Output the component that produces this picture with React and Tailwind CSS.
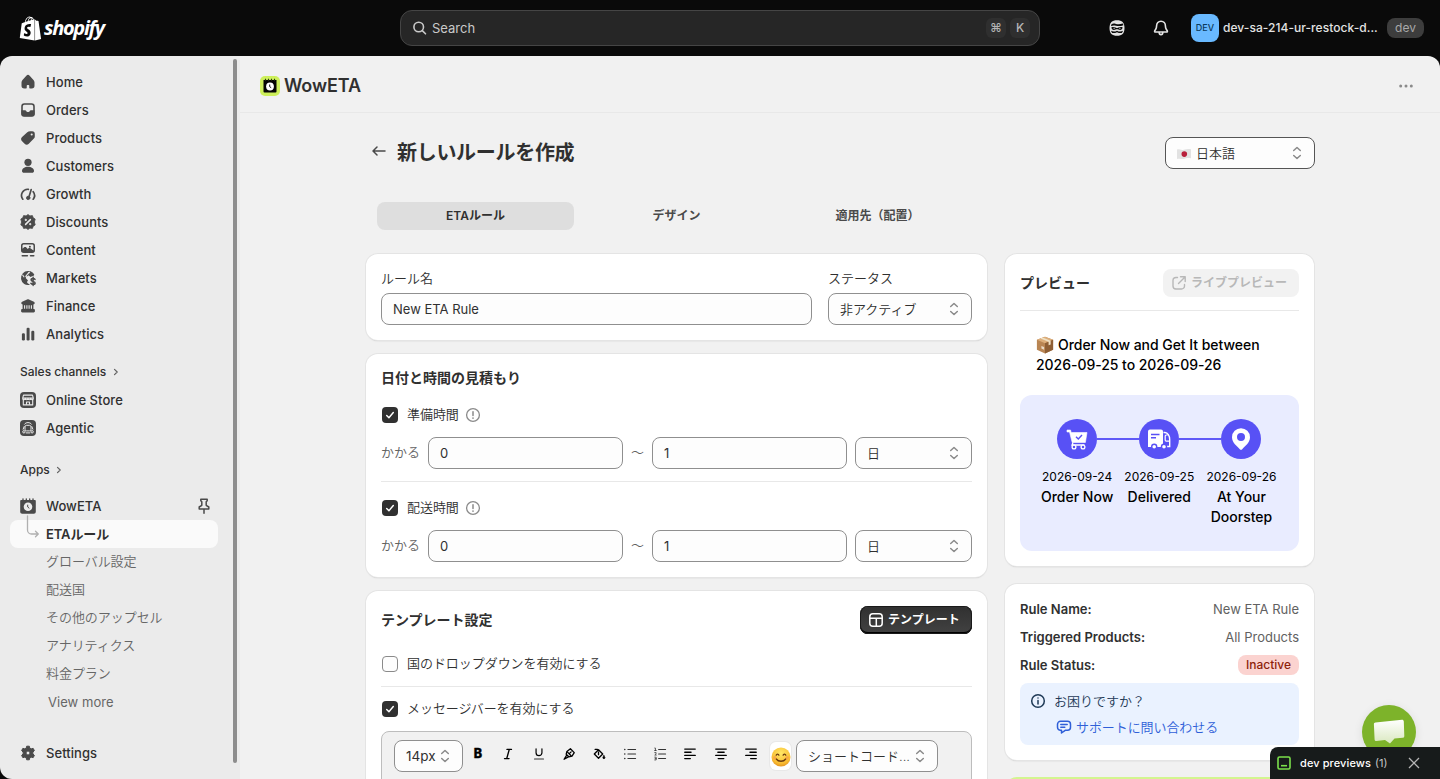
import React from 'react';
import { FaShopify } from 'react-icons/fa6';

const Svg = ({ children, className = 'size-5', ...p }) => (
  <svg viewBox="0 0 20 20" fill="currentColor" className={`shrink-0 ${className}`} {...p}>{children}</svg>
);
const Line = ({ children, className = 'size-5', w = 1.5, ...p }) => (
  <svg viewBox="0 0 20 20" fill="none" stroke="currentColor" strokeWidth={w} strokeLinecap="round" strokeLinejoin="round" className={`shrink-0 ${className}`} {...p}>{children}</svg>
);

const icons = {
  home: (
    <Svg><path d="M8.344 3.692a2.25 2.25 0 0 1 3.312 0l3.854 4.19a3.75 3.75 0 0 1 .99 2.538v3.33a2.75 2.75 0 0 1-2.75 2.75h-1.75a.75.75 0 0 1-.75-.75v-2a.75.75 0 0 0-.75-.75h-1a.75.75 0 0 0-.75.75v2a.75.75 0 0 1-.75.75h-1.75a2.75 2.75 0 0 1-2.75-2.75v-3.33c0-.94.353-1.846.99-2.539l3.854-4.189Z" /></Svg>
  ),
  orders: (
    <Svg><rect x="4" y="4" width="12" height="12" rx="2.400" fill="none" stroke="currentColor" strokeWidth="1.600" /><path d="M3.400 10.300h3.800c.4 0 .7.200.9.500l.4.700c.2.300.5.500.900.5h1.200c.4 0 .7-.2.900-.5l.4-.7c.2-.3.500-.5.900-.5h3.800v3.400a2.600 2.600 0 0 1-2.600 2.600H6a2.600 2.600 0 0 1-2.600-2.600v-3.400Z" /></Svg>
  ),
  products: (
    <Svg><path fillRule="evenodd" d="M12.100 3.300h2.100a2.600 2.600 0 0 1 2.600 2.600v2.500c0 .8-.3 1.600-.9 2.200l-5.100 5.100a3 3 0 0 1-4.200 0l-2.500-2.500a3 3 0 0 1 0-4.200l5.200-4.700c.8-.7 1.700-1 2.800-1Zm1.600 4.200a1.050 1.050 0 1 0 0-2.100 1.050 1.050 0 0 0 0 2.100Z" /></Svg>
  ),
  customers: (
    <Svg><circle cx="10" cy="6.300" r="3.600" /><path d="M4 14.900c0-2.400 2.700-4.100 6-4.100s6 1.700 6 4.100c0 1.100-.8 1.900-1.900 1.900H5.900C4.800 16.800 4 16 4 14.900Z" /></Svg>
  ),
  growth: (
    <Line w={1.700}><path d="M4.800 15.200a6.200 6.200 0 0 1 5.600-9.900M15.200 7.700a6.200 6.200 0 0 1 0 7.500" /><path d="m13.200 5.600-2.100 6.900" /><circle cx="10.200" cy="13.900" r="1.700" fill="currentColor" strokeWidth=".9" /></Line>
  ),
  discounts: (
    <Svg><path d="m10 2.500 1.900 1.400 2.500-.3.800 2.200 2 1.300-.8 2.900.8 2.900-2 1.300-.8 2.200-2.500-.3L10 17.500l-1.900-1.400-2.500.3-.8-2.200-2-1.300.8-2.900-.8-2.900 2-1.300.8-2.200 2.500.3L10 2.500Z" stroke="currentColor" strokeWidth=".8" strokeLinejoin="round" /><g stroke="#ebebeb" fill="#ebebeb"><path d="m7.600 12.400 4.800-4.800" strokeWidth="1.500" strokeLinecap="round" /><circle cx="7.800" cy="7.900" r=".7" /><circle cx="12.200" cy="12.100" r=".7" /></g></Svg>
  ),
  content: (
    <Svg><path fillRule="evenodd" d="M5.700 3h8.600A2.700 2.700 0 0 1 17 5.700v4.600a2.700 2.700 0 0 1-2.700 2.700H5.700A2.700 2.700 0 0 1 3 10.300V5.700A2.700 2.700 0 0 1 5.700 3Zm.1 1.500c-.7 0-1.300.6-1.300 1.300v3l1.600-1.500c.6-.5 1.500-.5 2 0l1.600 1.600.8-.7c.6-.4 1.300-.4 1.900 0l3.100 2.200V5.800c0-.7-.6-1.300-1.300-1.300H5.800Zm6.100 3.200a1 1 0 1 0 0-2 1 1 0 0 0 0 2Z" /><rect x="3.500" y="14.900" width="6.600" height="1.500" rx=".7" /><rect x="11.800" y="14.900" width="4.700" height="1.500" rx=".7" /></Svg>
  ),
  markets: (
    <Svg><path d="M10 3a7 7 0 1 0 2 13.700l-2.300-1.500c-.7-.5-.8-1.400-.3-2l.6-.7-1.800-1.900c-.6-.6-.4-1.500.3-1.900l1.500-.9c.8-.500 1-1.200.8-2l-.7-1.300 1.500-.8c1.300.5 2.400 1.200 3.200 2.300l-1.600 1.200.6.8 2.600-.9A7 7 0 0 0 10 3Z" /><path d="M16.100 7.200a7 7 0 0 0-3.600-3.700l-2.400 3.400 2.400 2.100 3.600-1.800Z" /><path d="m11 4.300-3.200 3.900 2 2.500M4.500 6.800l1.700 2.500" stroke="#ebebeb" strokeWidth="1.100" fill="none" /><path d="M17 11.400c-.5-.7-1.200-1-2-1-1.100 0-1.900.6-1.900 1.500 0 2 4 1 4 3 0 .9-.900 1.500-2 1.500-.9 0-1.700-.4-2.200-1.100M15.100 9.200v8.200" stroke="currentColor" strokeWidth="1.500" fill="none" strokeLinecap="round" /></Svg>
  ),
  finance: (
    <Svg><path d="M9.100 3.400c.6-.3 1.200-.3 1.800 0l5 2.300c1.400.7 1 2.600-.5 2.700v4.600h.3c.7 0 1.200.5 1.200 1.200v1c0 .7-.5 1.200-1.200 1.200H4.300c-.7 0-1.200-.5-1.200-1.200v-1c0-.7.5-1.200 1.200-1.200h.3V8.400c-1.500-.1-1.900-2-.5-2.700l5-2.300Z" /><path d="M6.600 9.200v3.600M8.900 9.200v3.600M11.100 9.200v3.600M13.400 9.200v3.600" stroke="#ebebeb" strokeWidth="1.100" /></Svg>
  ),
  analytics: (
    <Svg><rect x="3.900" y="9.300" width="3" height="7.200" rx="1.200" /><rect x="8.600" y="3.700" width="3" height="12.800" rx="1.200" /><rect x="13.300" y="6.800" width="3" height="9.700" rx="1.200" /></Svg>
  ),
  store: (
    <Svg><rect x="2" y="2" width="16" height="16" rx="4" /><g fill="none" stroke="#ebebeb" strokeWidth="1.100" strokeLinejoin="round"><path d="M5.500 5.100h9l.8 3H4.700l.8-3ZM5.300 9v5.900h9.400V9" /><path d="M4.700 8.200c0 2 2.600 2 2.600 0 0 2 2.700 2 2.700 0 0 2 2.700 2 2.700 0 0 2 2.600 2 2.600 0M8.500 14.700V12h3v2.700" /></g></Svg>
  ),
  agentic: (
    <Svg><rect x="2" y="2" width="16" height="16" rx="4" /><g fill="none" stroke="#ebebeb" strokeWidth="1"><rect x="7" y="7.300" width="6" height="5.600" rx="1.600" /><path d="M6.400 6.500C7.600 4 12.400 4 13.600 6.500M5 11.600l1.300-3.400M15 11.600l-1.300-3.400M7.800 14.900h4.400" /><circle cx="5.900" cy="13.800" r="1.200" /><circle cx="14.100" cy="13.800" r="1.200" /></g></Svg>
  ),
  wow: (
    <Svg><path d="M3.300 4h13.400c.7 0 1.100.4 1.100 1.100v10.600c0 1.200-.8 2-2 2H4.200c-1.200 0-2-.8-2-2V5.100c0-.7.4-1.100 1.100-1.100Z" /><path d="M5 2.800v2.500M8.300 2.800v2.500M11.700 2.800v2.500M15 2.800v2.500" stroke="currentColor" strokeWidth="1.300" strokeLinecap="round" /><circle cx="10" cy="10.800" r="4.300" fill="#ebebeb" /><path d="M9.700 8.700v2.300l1.600 1.300" stroke="currentColor" strokeWidth="1" fill="none" /></Svg>
  ),
  settings: (
    <Svg><path fillRule="evenodd" stroke="currentColor" strokeWidth="1" strokeLinejoin="round" d="M8.700 3.200h2.600l.5 2 1.300.7 2-.6 1.300 2.300-1.500 1.500v1.800l1.500 1.500-1.300 2.300-2-.6-1.300.7-.5 2H8.700l-.5-2-1.300-.7-2 .6-1.300-2.300 1.500-1.500V9.100L3.600 7.600l1.300-2.300 2 .6 1.300-.7.5-2ZM10 12a2 2 0 1 0 0-4 2 2 0 0 0 0 4Z" /></Svg>
  ),
};

const NavRow = ({ icon, children }) => (
  <div className="flex h-7 items-center gap-2 pl-[18px] text-[#4a4a4a]">
    {icons[icon]}
    <span className="pt-[2px] font-[550] tracking-[.05px] text-[#303030]">{children}</span>
  </div>
);
const SubRow = ({ children }) => <div className="flex h-7 items-center pl-[46px] font-[350] tracking-[-.05px] text-[#666]">{children}</div>;

const Updown = ({ className = '' }) => (
  <svg viewBox="0 0 10 14" className={`h-[14px] w-[10px] shrink-0 ${className}`} fill="none" stroke="#8a8a8a" strokeWidth="1.500" strokeLinecap="round" strokeLinejoin="round"><path d="M1.700 4.500 5 1.500l3.300 3M1.700 9.500l3.300 3 3.300-3" /></svg>
);
const Field = ({ children, className = '', select, pr = 'pr-3', text = 'pt-[2px]' }) => (
  <div className={`flex h-8 items-center justify-between rounded-lg border border-[#8f8f8f] bg-[#fdfdfd] pl-[11px] text-[#303030] ${pr} ${className}`}>
    <span className={`whitespace-nowrap ${text}`}>{children}</span>
    {select && <Updown />}
  </div>
);
const Card = ({ children, className = '' }) => (
  <section className={`rounded-xl bg-white shadow-[0_0_0_1px_#e4e4e4,0_2px_0_-1px_#c6c6c6,0_2px_2px_-1px_#00000022] ${className}`}>{children}</section>
);
const Check = ({ on, children, info }) => (
  <div className="flex h-5 items-center text-[#303030]">
    {on ? (
      <span className="ml-px grid size-4 place-items-center rounded bg-[#303030] text-white"><Line className="size-3" w={2.400}><path d="m4.500 10.800 3.700 3.700 7.300-8.700" /></Line></span>
    ) : (
      <span className="ml-px size-4 rounded border border-[#8a8a8a] bg-[#fdfdfd]" />
    )}
    <span className="ml-[9px] font-[350] tracking-[-.05px]">{children}</span>
    {info && <Line className="ml-1 size-5 text-[#8a8a8a]" w={1.300}><circle cx="10" cy="10" r="6.400" /><path d="M10 6.800v3.800" strokeWidth="1.500" /><path d="M10 13v.1" strokeWidth="1.700" /></Line>}
  </div>
);
const TimeRow = () => (
  <div className="flex items-center">
    <span className="w-[47px] font-[350] text-[#616161]">かかる</span>
    <Field className="w-[195px]">0</Field>
    <span className="w-[29px] text-center font-[350] text-[#616161]">～</span>
    <Field className="w-[195px]">1</Field>
    <Field className="ml-2 w-[117px] font-[350]" text="pt-px" select>日</Field>
  </div>
);

const tools = [
  <text key="b" x="10" y="15.900" textAnchor="middle" fontSize="18" fontWeight="800" fill="#000" stroke="#000" strokeWidth=".5">B</text>,
  <g key="i" strokeWidth="1.900"><path d="M8.500 3.500h6.500M5 16.500h6.500M11.800 3.500 8.200 16.500" /></g>,
  <g key="u"><path d="M5.800 2.500v5.700a4.200 4.200 0 0 0 8.400 0V2.500" /><path d="M3.500 17h13" strokeWidth="1.500" stroke="#333" /></g>,
  <g key="p" strokeWidth="1.900"><path d="m12 2.500 5.500 5.500-3.200 5-4.600 1-3.700-3.700 1-3.800L12 2.500Z" /><path d="m7.500 7 5.500 5.500M6.500 12 3 17.500l5.500-3M10.500 9.500l2.500-2.500" /></g>,
  <g key="f" strokeWidth="1.900"><path d="m9.300 4 6 6-6 6-6-6 6-6ZM4.500 3.500h3.300L10 5.500M9.300 7.500v3.500" /><path d="M17 12.500c1 1.400 1.400 2 1.400 2.700a1.400 1.400 0 0 1-2.800 0c0-.7.400-1.300 1.400-2.700Z" fill="#000" strokeWidth="1.200" /></g>,
  <g key="ul" stroke="#333" strokeWidth="1.500"><path d="M7 3.500h11M7 10h11M7 16.500h11" /><path d="M2.500 3.500h.1M2.500 10h.1M2.500 16.500h.1" strokeWidth="2.200" /></g>,
  <g key="ol" stroke="#333" strokeWidth="1.500"><path d="M8 3.500h10M8 10h10M8 16.500h10" /><path d="M2.500 1.500h1V5M2.300 5h2.400M2.500 8h1.900v1.700l-1.900 1.800h2.200M2.500 14.500h2v4h-2M3 16.500h1.500" strokeWidth="1.100" /></g>,
  <g key="l" strokeWidth="1.900"><path d="M2.500 3h15M2.500 7.500h9M2.500 12h15M2.500 16.500h8" /></g>,
  <g key="c" strokeWidth="1.900"><path d="M2.500 3h15M5.500 7.500h9M2.500 12h15M6 16.500h8" /></g>,
  <g key="r" strokeWidth="1.900"><path d="M2.500 3h15M8.500 7.500h9M2.500 12h15M9.500 16.500h8" /></g>,
];

const steps = [
  { date: '2026-09-24', label: 'Order Now', icon: (
    <svg viewBox="0 0 24 24" className="size-6" fill="#fff"><path d="M2 3h3.500l.7 2.500H22l-1.600 10H7.200L4.500 5H2V3Z" stroke="#fff" strokeWidth=".6" strokeLinejoin="round" /><path d="m11 9.800 2.300 2.200 3.700-4" fill="none" stroke="#5851f5" strokeWidth="1.400" /><path d="M8 15.500 7 18h12.500" fill="none" stroke="#fff" strokeWidth="1.300" /><circle cx="9" cy="20" r="1.900" fill="#5851f5" stroke="#fff" strokeWidth="1.300" /><circle cx="18" cy="20" r="1.900" fill="#5851f5" stroke="#fff" strokeWidth="1.300" /></svg>) },
  { date: '2026-09-25', label: 'Delivered', icon: (
    <svg viewBox="0 0 24 24" className="size-6" fill="#fff"><path d="M3 2.500h11a2 2 0 0 1 2 2V20H1V4.500a2 2 0 0 1 2-2Z" /><path d="M16.500 5.500h1.500c2.700 0 4.700 3.500 4.700 7v7h-6" fill="none" stroke="#fff" strokeWidth="1.400" /><path d="M20.800 8h-1.600c-.7 0-1 .5-1 1v4c0 .7.300 1.200 1 1.200h3.200" fill="none" stroke="#fff" strokeWidth="1.200" /><path d="M4 7.500h8.500M4 10.800h5" stroke="#5851f5" strokeWidth="1.400" /><circle cx="7.200" cy="19.800" r="2.500" stroke="#5851f5" strokeWidth="1.400" /><circle cx="17" cy="19.800" r="2.500" stroke="#5851f5" strokeWidth="1.400" /></svg>) },
  { date: '2026-09-26', label: 'At Your Doorstep', icon: (
    <svg viewBox="0 0 24 24" className="size-6" fill="#fff"><path fillRule="evenodd" d="M12 1.200a9 9 0 0 0-9 9c0 5.500 5.200 8.800 7.800 12.100.6.700 1.800.7 2.400 0 2.600-3.300 7.800-6.600 7.800-12.100a9 9 0 0 0-9-9Zm0 12.800a4 4 0 1 0 0-8 4 4 0 0 0 0 8Z" /></svg>) },
];

function TopBar() {
  return (
    <header className="flex h-14 shrink-0 items-center bg-[#0a0a0a] text-[#e3e3e3]">
      <div className="flex w-[400px] items-center pl-[19px] text-white">
        <FaShopify className="h-[25px] w-[23px]" />
        <span className="ml-[2px] inline-block pb-px font-['Open_Sans',sans-serif] text-[20px] font-bold italic leading-none tracking-[-1.300px]">shopify</span>
      </div>
      <div className="flex h-9 w-[640px] items-center rounded-xl border border-[#454545] bg-[#262626] pl-[9px] pr-[9px] text-[#c9c9c9]">
        <Line w={1.600}><circle cx="8.700" cy="9" r="4.800" /><path d="m12.300 12.600 3.200 3.200" /></Line>
        <span className="ml-[2px] flex-1 pt-[2px] text-[13px]">Search</span>
        <kbd className="grid size-5 place-items-center rounded-md bg-[#2f2f2f] font-[Inter,sans-serif] text-[12px] font-[550] text-[#b5b5b5]">⌘</kbd>
        <kbd className="ml-1 grid size-5 place-items-center rounded-md bg-[#2f2f2f] font-[Inter,sans-serif] text-[12px] font-[550] text-[#b5b5b5]">K</kbd>
      </div>
      <div className="ml-[67px] flex items-center">
        <Svg><path d="M10 2.200c5 0 7.500 2.300 7.500 7.800s-2.500 7.800-7.500 7.800S2.500 15.500 2.500 10 5 2.200 10 2.200Z" /><g fill="#0a0a0a"><path d="M4.300 6.500c1.500-1.300 3.200-.9 4.700-.5 2.200.5 4.500.3 6.700-.4.400.5.600 1 .7 1.600-2.400.9-4.900 1.100-7.400.6-1.900-.4-3.400-.4-5 .3l.3-1.600Z" /><path d="M4.400 9.300c1.800-.4 3.400-.2 4.700.4.600.3 1.200.3 1.800 0 1.300-.6 2.900-.8 4.700-.4-.2 1.700-1 2.600-2.500 2.600-1.300 0-2.100-.7-3.100-.7s-1.800.7-3.100.7c-1.500 0-2.300-.9-2.500-2.600Z" /><path d="M4 12.800c1.800 1.200 4.200 1 6-.1 1.800 1.100 4.200 1.300 6 .1-.3 1-.7 1.700-1.200 2.200-1.600.2-3.300-.1-4.800-.8-1.500.7-3.200 1-4.800.8-.5-.5-.9-1.200-1.200-2.200Z" /></g><path d="M6.500 10.300h1.300M12.200 10.300h1.300M8.600 15.900h2.800" stroke="#e3e3e3" strokeWidth=".9" /></Svg>
        <Line className="ml-6 size-5" w={1.600}><path d="M10 3.200c-2.700 0-4.400 2-4.400 4.500 0 1.500-.2 2.600-1 3.800l-.9 1.300c-.3.500 0 1.200.6 1.200h11.400c.6 0 .9-.7.600-1.200l-.9-1.300c-.8-1.200-1-2.300-1-3.800 0-2.500-1.700-4.500-4.400-4.500Z" /><path d="M8.200 14.500c0 2.800 3.600 2.800 3.600 0" /></Line>
        <span className="ml-5 grid size-7 place-items-center rounded-lg bg-[#69b9ff] text-[9px] font-medium text-[#0b3a5c]">DEV</span>
        <span className="ml-1 w-[158px] whitespace-nowrap text-[12px] font-[550] tracking-[.05px]">dev-sa-214-ur-restock-d...</span>
        <span className="ml-[6px] grid h-5 w-[37px] place-items-center rounded-lg bg-[#3d3d3d] text-[12px] text-[#a9a9a9]">dev</span>
      </div>
    </header>
  );
}

function Sidebar() {
  return (
    <aside className="flex w-60 shrink-0 justify-between rounded-bl-xl bg-[#ebebeb]">
      <nav className="w-[218px] pt-3">
        <NavRow icon="home">Home</NavRow>
        <NavRow icon="orders">Orders</NavRow>
        <NavRow icon="products">Products</NavRow>
        <NavRow icon="customers">Customers</NavRow>
        <NavRow icon="growth">Growth</NavRow>
        <NavRow icon="discounts">Discounts</NavRow>
        <NavRow icon="content">Content</NavRow>
        <NavRow icon="markets">Markets</NavRow>
        <NavRow icon="finance">Finance</NavRow>
        <NavRow icon="analytics">Analytics</NavRow>
        <div className="mt-[10px] flex h-7 items-center gap-1 pl-5 text-[12px] font-[550] text-[#303030]">Sales channels<Line className="size-3 text-[#616161]" w={2}><path d="m7.500 5.500 4.500 4.500-4.500 4.500" /></Line></div>
        <NavRow icon="store">Online Store</NavRow>
        <NavRow icon="agentic">Agentic</NavRow>
        <div className="mt-[14px] flex h-7 items-center gap-[3px] pl-5 text-[12px] font-[550] text-[#303030]">Apps<Line className="size-3 text-[#616161]" w={2}><path d="m7.500 5.500 4.500 4.500-4.500 4.500" /></Line></div>
        <div className="mt-2 flex items-center justify-between pr-1">
          <NavRow icon="wow">WowETA</NavRow>
          <Line className="size-5 text-[#4a4a4a]" w={1.500}><path d="M6.800 3.200h6.400v1.600l-1 1v3.500l2.600 1.700v2H5.200v-2l2.600-1.700V5.800l-1-1V3.200ZM10 13.200v4" /></Line>
        </div>
        <div className="relative ml-[10px] flex h-7 items-center rounded-lg bg-[#fafafa] pl-9 font-semibold text-[#303030]">
          <svg viewBox="0 0 16 24" className="absolute -top-[5px] left-[15px] h-6 w-4" fill="none" stroke="#b0b0b0" strokeWidth="1.300" strokeLinecap="round" strokeLinejoin="round"><path d="M2.500 1v14a4 4 0 0 0 4 4h6.500M10.500 16.200l2.800 2.800-2.800 2.800" /></svg>
          <span className="pt-px tracking-[-.1px]">ETAルール</span>
        </div>
        <SubRow>グローバル設定</SubRow>
        <SubRow>配送国</SubRow>
        <SubRow>その他のアップセル</SubRow>
        <SubRow>アナリティクス</SubRow>
        <SubRow>料金プラン</SubRow>
        <SubRow><span className="pl-[2px] pt-[2px] font-normal tracking-[.05px]">View more</span></SubRow>
        <div className="mt-[23px]"><NavRow icon="settings">Settings</NavRow></div>
      </nav>
      <div className="mr-[3px] mt-[3px] h-[704px] w-1 rounded-full bg-[#8c8c8c]" />
    </aside>
  );
}

function Editor() {
  return (
    <div className="w-[621px]">
      <Card className="flex h-[86px] gap-4 px-[15px] pt-[15px]">
        <div><div className="-mt-px mb-[5px] h-5 font-[350] leading-5 text-[#303030]">ルール名</div><Field className="w-[431px]">New ETA Rule</Field></div>
        <div><div className="-mt-px mb-[5px] h-5 font-[350] leading-5 text-[#303030]">ステータス</div><Field className="w-[144px] font-[350]" text="pt-px" select>非アクティブ</Field></div>
      </Card>
      <Card className="mt-[14px] h-[223px] px-[15px] pt-[14px]">
        <h2 className="text-[14px] font-semibold leading-5 text-[#303030]">日付と時間の見積もり</h2>
        <div className="mb-3 mt-[17px]"><Check on info>準備時間</Check></div>
        <TimeRow />
        <hr className="mb-4 mt-3 border-[#e8e8e8]" />
        <div className="mb-3"><Check on info>配送時間</Check></div>
        <TimeRow />
      </Card>
      <Card className="mt-[14px] h-[240px] px-[15px] pt-[15px]">
        <div className="flex h-7 items-center justify-between">
          <h2 className="pb-[2px] text-[14px] font-semibold text-[#303030]">テンプレート設定</h2>
          <button className="flex h-7 w-28 items-center justify-start rounded-lg bg-gradient-to-b from-[#303030] to-[#424242] pb-px pl-[6px] text-[12px] font-semibold text-white shadow-[inset_0_0_0_1px_#1a1a1a,inset_0_-2px_0_#000,inset_0_2px_0_-1px_#666]">
            <Line w={1.500} className="mr-[2px] size-5"><rect x="3.800" y="3.800" width="12.400" height="12.400" rx="3" /><path d="M4 8.200h12M10.300 8.200v8" /></Line>テンプレート
          </button>
        </div>
        <div className="mb-3 mt-5"><Check>国のドロップダウンを有効にする</Check></div>
        <hr className="mb-3 border-[#e8e8e8]" />
        <Check on>メッセージバーを有効にする</Check>
        <div className="mt-3 flex h-[120px] rounded-lg border border-[#bdbdbd] bg-[#f1f1f1] pl-3 pt-2">
          <Field className="w-[69px]" select pr="pr-3" text="pt-px text-[13.500px]">14px</Field>
          <div className="grid h-7 w-[303px] grid-cols-10 place-items-center">
            {tools.map((t, i) => (
              <svg key={i} viewBox="0 0 20 20" className="size-[14px]" fill="none" stroke="#000" strokeWidth="1.700" strokeLinecap="round" strokeLinejoin="round">{t}</svg>
            ))}
          </div>
          <div className="ml-1 mt-[2px] grid h-7 w-[21px] place-items-center rounded-md bg-white shadow-[0_0_0_1px_#e8e8e8]">
            <svg viewBox="0 0 20 20" className="-mx-px mt-px size-5"><defs><radialGradient id="face" cx=".5" cy=".3" r=".75"><stop offset="0" stopColor="#ffe867" /><stop offset=".7" stopColor="#f9bd32" /><stop offset="1" stopColor="#e08a1c" /></radialGradient></defs><circle cx="10" cy="10" r="9.500" fill="url(#face)" /><g fill="none" stroke="#6b3a10" strokeWidth="1.300" strokeLinecap="round"><path d="M5.200 8.200c.5-1.500 2.200-1.500 2.700 0M12.100 8.200c.5-1.500 2.200-1.500 2.700 0M5.300 12c2.200 3 7.200 3 9.400 0" /></g><circle cx="3.800" cy="10.800" r="1.700" fill="#f58a4a" opacity=".5" /><circle cx="16.200" cy="10.800" r="1.700" fill="#f58a4a" opacity=".5" /></svg>
          </div>
          <Field className="ml-[5px] w-[142px] font-[350]" text="pt-px" select>ショートコード...</Field>
        </div>
      </Card>
    </div>
  );
}

function Preview() {
  return (
    <div className="w-[309px]">
      <Card className="h-[312px] px-[15px] pt-[15px]">
        <div className="flex h-7 items-center justify-between">
          <h2 className="pb-px text-[14px] font-semibold text-[#303030]">プレビュー</h2>
          <button className="flex h-7 w-[136px] items-center justify-start rounded-lg bg-[#f2f2f2] pl-[6px] text-[12px] font-semibold text-[#b8b8b8]">
            <Line className="mr-[2px] size-5" w={1.400}><path d="M8.500 4.500H7A3 3 0 0 0 4 7.500V13a3 3 0 0 0 3 3h5.500a3 3 0 0 0 3-3v-1.500M11.500 3.800h4.700v4.700M16 4l-6.500 6.500" /></Line>ライブプレビュー
          </button>
        </div>
        <hr className="mt-[13px] border-[#e8e8e8]" />
        <p className="ml-4 mt-6 text-[14px] font-[450] leading-5 tracking-[-.04px] text-black">
          <svg viewBox="0 0 20 20" className="-mt-[3px] mr-1 inline-block size-[18px]"><path d="m10 .8 9 3.500v11L10 19.500l-9-4.200v-11L10 .8Z" fill="#b98553" /><path d="m10 .8 9 3.500L10 8 1 4.300 10 .8Z" fill="#dcae7b" /><path d="m10 8 9-3.700v11L10 19.500V8Z" fill="#8f5f35" /><path d="m5 2.700 9 3.700v4l2.300-1V5.300L7.300 1.800 5 2.700Z" fill="#efe0c4" /><path d="m6 11 3 1.300v3L6 14v-3Z" fill="#eadcc9" /></svg>
          Order Now and Get It between<br />2026-09-25 to 2026-09-26
        </p>
        <div className="mt-5 flex h-[156px] rounded-xl bg-[#e9ecff] px-4 pt-6 text-black">
          {steps.map((s, i) => (
            <div key={s.date} className="flex w-[82.2px] shrink-0 flex-col items-center">
              <div className="flex w-full items-center">
                <span className={`h-0.5 flex-1 ${i > 0 ? 'bg-[#5f59f7]' : ''}`} />
                <span className="grid size-10 place-items-center rounded-full bg-[#5851f5]">{s.icon}</span>
                <span className={`h-0.5 flex-1 ${i < 2 ? 'bg-[#5f59f7]' : ''}`} />
              </div>
              <span className="mt-2 whitespace-nowrap text-[12px] leading-5">{s.date}</span>
              <span className="text-center text-[14px] font-medium leading-5">{s.label}</span>
            </div>
          ))}
        </div>
      </Card>
      <Card className="mt-[18px] h-[176px] px-[15px] pt-[15px]">
        <div className="flex flex-col gap-2 leading-5 text-[#303030]">
          <div className="flex justify-between"><b className="font-semibold">Rule Name:</b><span className="text-[#616161]">New ETA Rule</span></div>
          <div className="flex justify-between"><b className="font-semibold">Triggered Products:</b><span className="text-[#616161]">All Products</span></div>
          <div className="flex justify-between"><b className="font-semibold">Rule Status:</b><span className="h-5 rounded-lg bg-[#fbd3d0] px-2 text-[12px] font-medium text-[#8e1f0b]">Inactive</span></div>
        </div>
        <div className="mt-2 h-[62px] rounded-lg bg-[#eaf2ff] px-2 pt-2 font-[350] leading-5">
          <div className="flex items-center text-[#1f3a57]"><Line w={1.500}><circle cx="10" cy="10" r="6.300" /><path d="M10 9.500v3.500M10 7v.1" /></Line><span className="ml-[6px]">お困りですか？</span></div>
          <div className="mt-[6px] flex items-center pl-[26px] text-[#2f5fd8]"><Line w={1.500}><path d="M6.500 4.300h7a3 3 0 0 1 3 3v3a3 3 0 0 1-3 3h-2.300L7.500 16v-2.700h-1a3 3 0 0 1-3-3v-3a3 3 0 0 1 3-3ZM6.800 7.500h6.400M6.800 10.300h4" /></Line><span className="ml-[2px] tracking-[-.08px]">サポートに問い合わせる</span></div>
        </div>
      </Card>
      <div className="mt-[17px] h-8 rounded-t-xl border-t-[3px] border-[#d3f58f] bg-[#e4fab5]" />
    </div>
  );
}

export default function App() {
  return (
    <div className="relative flex h-[779px] w-[1440px] flex-col overflow-hidden bg-[#0a0a0a] font-[Inter,'Noto_Sans_CJK_JP',sans-serif] text-[13px]">
      <TopBar />
      <div className="flex min-h-0 flex-1 overflow-hidden rounded-t-xl bg-[#0a0a0a]">
        <Sidebar />
        <main className="min-w-0 flex-1 overflow-hidden bg-[#f1f1f1]">
          <div className="flex h-[57px] items-center justify-between border-b border-[#e8e8e8] pl-5 pr-6 pt-[3px]">
            <div className="flex items-center gap-1">
              <svg viewBox="0 0 20 20" className="size-5"><rect width="20" height="20" rx="5" fill="#cdef5b" /><path d="M3.500 4h13v11.500a1 1 0 0 1-1 1h-11a1 1 0 0 1-1-1V4Z" fill="#050505" /><path d="M5.500 2.800v2M8.500 2.800v2M11.500 2.800v2M14.500 2.800v2" stroke="#2c3b10" strokeWidth="1.200" /><circle cx="10" cy="10.500" r="3.900" fill="#fff" /><path d="M9.700 8.500v2.200l1.500 1" stroke="#111" fill="none" /></svg>
              <span className="text-[18px] font-semibold tracking-[-.1px] text-[#303030]">WowETA</span>
            </div>
            <svg viewBox="0 0 20 20" className="size-5" fill="#8a8a8a"><circle cx="4.700" cy="10" r="1.500" /><circle cx="10" cy="10" r="1.500" /><circle cx="15.300" cy="10" r="1.500" /></svg>
          </div>
          <div className="mx-auto w-[948px]">
            <div className="mt-6 flex h-8 items-center justify-between">
              <div className="flex items-center pl-[3px]">
                <Line className="-mt-1 size-5 text-[#4a4a4a]" w={1.500}><path d="M16 10H4.300M8 6l-4 4 4 4" /></Line>
                <h1 className="ml-2 text-[20px] font-semibold leading-8 tracking-[-.3px] text-[#303030]">新しいルールを作成</h1>
              </div>
              <Field className="-mr-px w-[150px] border-[#555] font-[350]" text="pt-px" select><span className="flex items-center gap-[5px]"><svg viewBox="0 0 14 12" className="h-3 w-[14px]"><path d="M0 1.500c3-1.200 5 1 7 .3s4-1.300 7-.5v9c-3-.8-5 0-7 .6s-4-.9-7 .1v-9.500Z" fill="#e2e2e2" /><circle cx="7.300" cy="6.100" r="2.800" fill="#b8203c" /></svg>日本語</span></Field>
            </div>
            <div className="ml-[11px] mt-[33px] flex h-7 gap-1 text-[12px] font-semibold text-[#303030]">
              <div className="grid w-[197px] place-items-center rounded-lg bg-[#dedede]">ETAルール</div>
              <div className="grid w-[197px] place-items-center text-[#4a4a4a]">デザイン</div>
              <div className="grid w-[197px] place-items-center text-[#4a4a4a]">適用先（配置）</div>
            </div>
            <div className="mt-6 flex items-start gap-[18px]">
              <Editor />
              <Preview />
            </div>
          </div>
        </main>
      </div>
      <div className="absolute left-[1362px] top-[705px] grid size-[54px] place-items-center rounded-full bg-[#7db32a] shadow-[0_2px_10px_#00000018]">
        <svg viewBox="0 0 32 28" className="h-7 w-8"><defs><linearGradient id="bubble" x1="0" y1="0" x2="0" y2="1"><stop offset="0" stopColor="#fff" /><stop offset="1" stopColor="#d9e8bf" /></linearGradient></defs><path d="M2.500 4.500 29 1.800c1 0 1.700.6 1.800 1.600l.5 14.500c0 1-.6 1.800-1.600 1.900l-8.200.8-4.500 5-5-3.500-8.500.9c-1 .1-1.800-.6-1.900-1.600L.9 6.300c0-1 .6-1.700 1.600-1.800Z" fill="url(#bubble)" /></svg>
      </div>
      <div className="absolute bottom-0 right-0 flex h-8 w-[170px] items-center rounded-tl-lg bg-[#171b1b] pl-[7px] text-[11px] font-medium text-white">
        <svg viewBox="0 0 14 14" className="size-[14px]" fill="none" stroke="#7be04b" strokeWidth="1.600"><rect x="1" y="1" width="12" height="12" rx="1.500" /><path d="M4 9.700h6" /></svg>
        <span className="ml-[9px] tracking-[.1px]">dev previews</span>
        <span className="ml-1 font-normal text-[#c4c4c4]">(1)</span>
        <svg viewBox="0 0 12 12" className="ml-5 size-3" stroke="#b5b5b5" strokeWidth="1.300"><path d="m1 1 10 10M11 1 1 11" /></svg>
      </div>
    </div>
  );
}
